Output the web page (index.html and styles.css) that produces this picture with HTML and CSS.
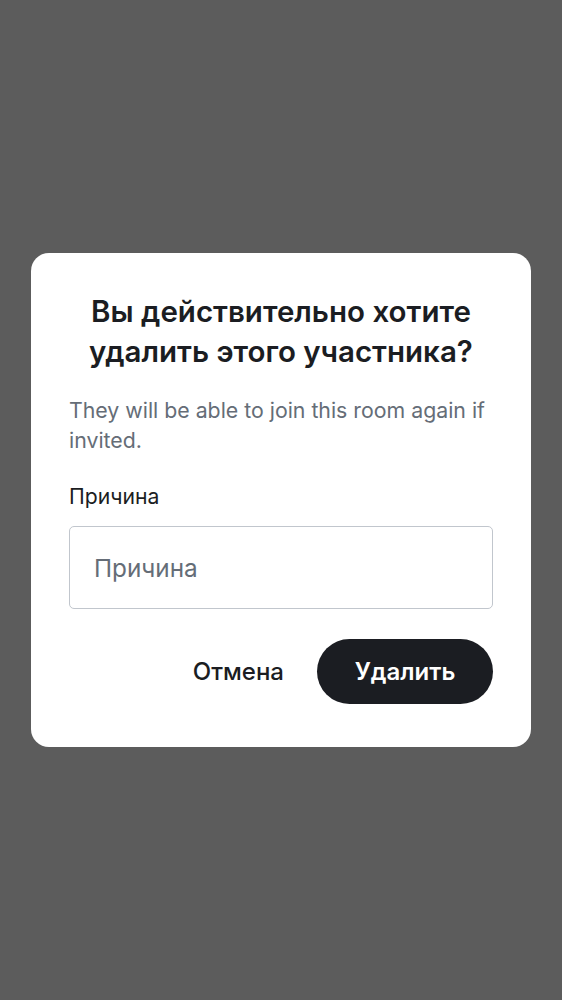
FILE: index.html
```
<!DOCTYPE html>
<html lang="ru">
<head>
<meta charset="utf-8">
<link rel="stylesheet" href="styles.css">
</head>
<body>
<div class="backdrop">
  <div class="dialog">
    <h1 class="title">Вы действительно хотите удалить этого участника?</h1>
    <p class="desc">They will be able to join this room again if invited.</p>
    <label class="label" for="reason">Причина</label>
    <input class="field" id="reason" type="text" placeholder="Причина">
    <div class="actions">
      <button class="btn btn-ghost">Отмена</button>
      <button class="btn btn-primary">Удалить</button>
    </div>
  </div>
</div>
</body>
</html>
```
FILE: styles.css
```
html, body {
  margin: 0;
  padding: 0;
  height: 100%;
}
body {
  font-family: Inter, "Noto Sans", sans-serif;
  background: #5c5c5c;
}
.backdrop {
  height: 1000px;
  display: flex;
  flex-direction: column;
  align-items: center;
  padding-top: 253px;
  box-sizing: border-box;
}
.dialog {
  box-sizing: border-box;
  width: 500px;
  background: #fff;
  border-radius: 18px;
  padding: 38px 38px 43px;
  display: flex;
  flex-direction: column;
}
.title {
  margin: 0;
  font-size: 29.5px;
  line-height: 40px;
  font-weight: 600;
  color: #1b1d22;
  text-align: center;
}
.desc {
  margin: 24px 0 0;
  font-size: 21.3px;
  line-height: 30px;
  color: #656d77;
}
.label {
  margin-top: 28px;
  font-size: 21.2px;
  line-height: 26px;
  font-weight: 400;
  color: #1b1d22;
}
.field {
  margin-top: 17px;
  box-sizing: border-box;
  height: 83px;
  border: 1px solid #c1c6cd;
  border-radius: 5px;
  padding: 0 24px;
  font-family: inherit;
  font-size: 24.3px;
  color: #1b1d22;
  outline: none;
}
.field::placeholder {
  color: #656d77;
}
.actions {
  margin-top: 30px;
  display: flex;
  justify-content: flex-end;
  align-items: center;
  gap: 33px;
}
.btn {
  font-family: inherit;
  font-size: 24px;
  font-weight: 600;
  border: none;
  cursor: pointer;
}
.btn-ghost {
  background: transparent;
  color: #1b1d22;
  font-weight: 500;
  padding: 0;
}
.btn-primary {
  background: #1b1d22;
  color: #fff;
  height: 65px;
  width: 176px;
  border-radius: 33px;
}
```
